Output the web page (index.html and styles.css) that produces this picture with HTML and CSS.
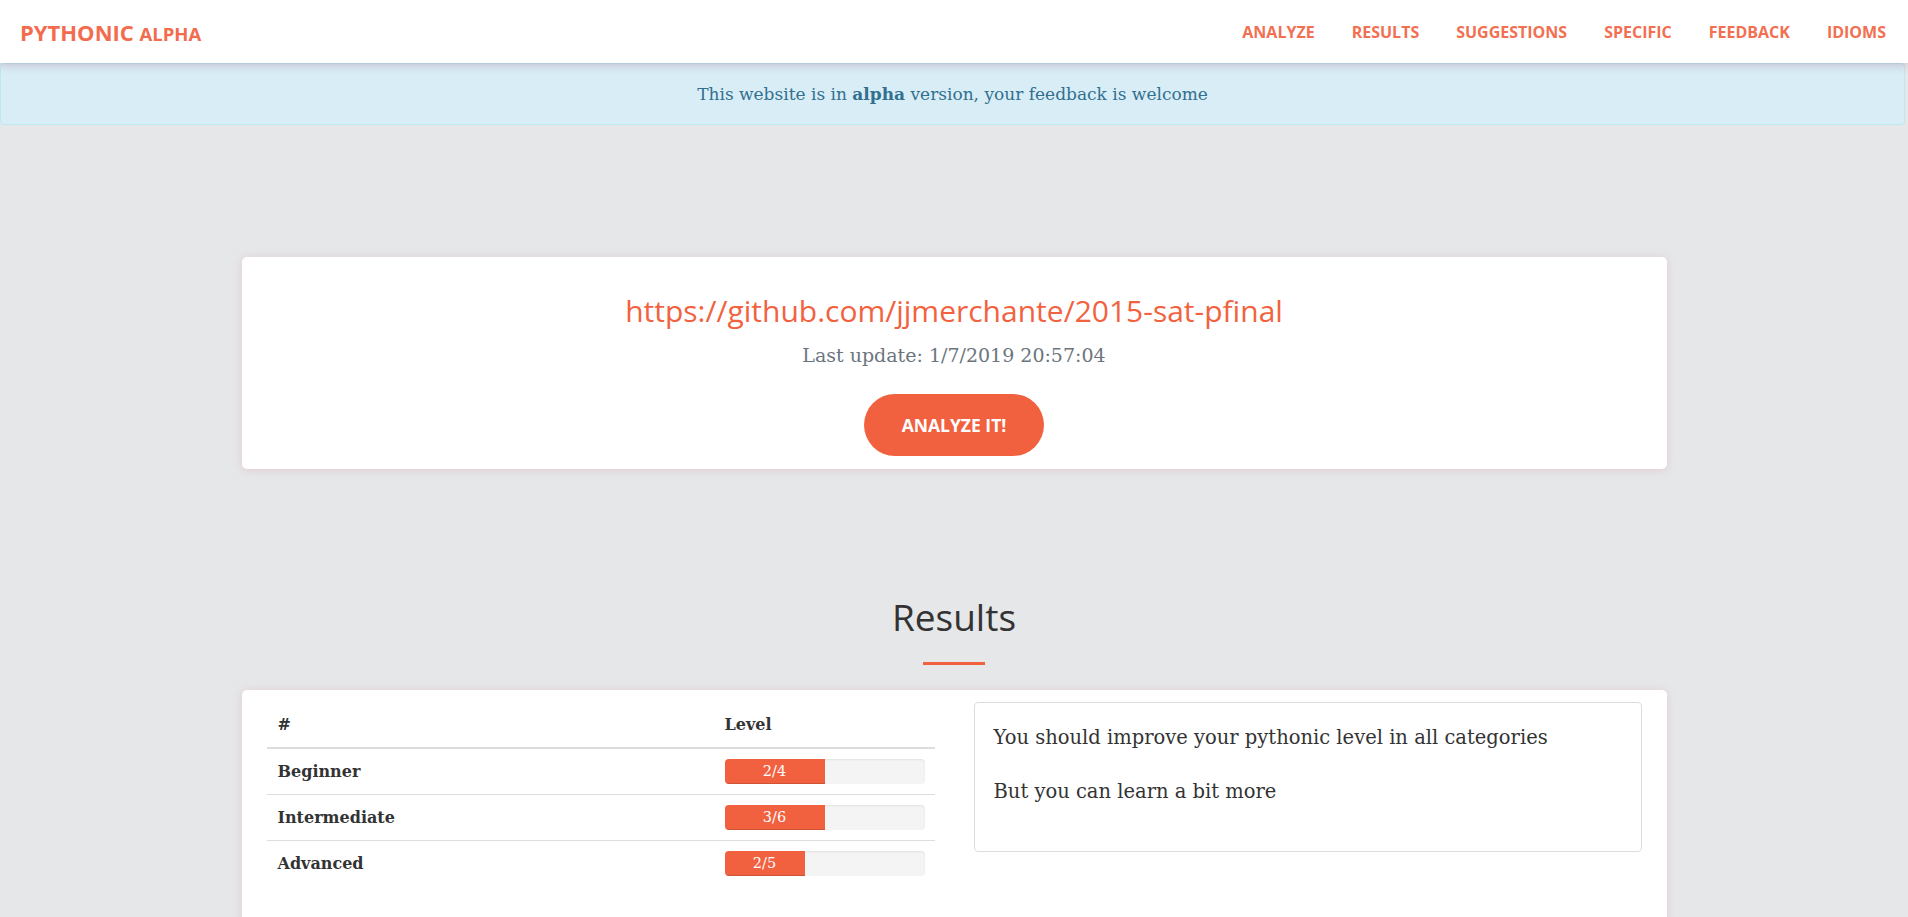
FILE: index.html
```html
<!DOCTYPE html>
<html lang="en">
<head>
<meta charset="utf-8">
<title>Pythonic alpha</title>
<link rel="stylesheet" href="styles.css">
</head>
<body>
<header class="navbar">
  <a class="brand" href="#">PYTHONIC <span class="alpha">ALPHA</span></a>
  <nav class="nav">
    <a href="#">ANALYZE</a>
    <a href="#">RESULTS</a>
    <a href="#">SUGGESTIONS</a>
    <a href="#">SPECIFIC</a>
    <a href="#">FEEDBACK</a>
    <a href="#">IDIOMS</a>
  </nav>
</header>
<div class="alert">This website is in <b>alpha</b> version, your feedback is welcome</div>
<main class="container">
  <section class="card repo-card">
    <a class="repo-url" href="#">https://github.com/jjmerchante/2015-sat-pfinal</a>
    <p class="last-update">Last update: 1/7/2019 20:57:04</p>
    <a class="btn-analyze" href="#">ANALYZE IT!</a>
  </section>
  <h2 class="section-title">Results</h2>
  <div class="title-rule"></div>
  <section class="card results-card">
    <table class="levels">
      <colgroup><col><col class="level-col"></colgroup>
      <thead>
        <tr><th>#</th><th>Level</th></tr>
      </thead>
      <tbody>
        <tr><td>Beginner</td><td><div class="bar"><div class="fill" style="width:50%">2/4</div></div></td></tr>
        <tr><td>Intermediate</td><td><div class="bar"><div class="fill" style="width:50%">3/6</div></div></td></tr>
        <tr><td>Advanced</td><td><div class="bar"><div class="fill" style="width:40%">2/5</div></div></td></tr>
      </tbody>
    </table>
    <div class="advice">
      <p>You should improve your pythonic level in all categories</p>
      <p>But you can learn a bit more</p>
    </div>
  </section>
</main>
</body>
</html>
```
FILE: styles.css
```css
html, body {
  margin: 0;
  padding: 0;
}
body {
  background: #e6e7e9;
  font-family: "DejaVu Serif", "Liberation Serif", serif;
  color: #333;
  min-height: 1100px;
}
a { text-decoration: none; }

.navbar {
  height: 63px;
  background: #fff;
  display: flex;
  align-items: center;
  justify-content: space-between;
  padding: 0 22px 0 20px;
  box-shadow: 0 3px 8px rgba(150, 90, 120, 0.28);
  position: relative;
  z-index: 2;
}
.brand {
  font-family: "Open Sans", sans-serif;
  font-weight: 700;
  font-size: 22px;
  color: #f26c4d;
}
.brand .alpha { font-size: 18.5px; }
.nav {
  display: flex;
  gap: 37px;
}
.nav a {
  font-family: "Open Sans", sans-serif;
  font-weight: 700;
  font-size: 16px;
  color: #f26f51;
}

.alert {
  margin: 0 3px 0 0;
  height: 62px;
  box-sizing: border-box;
  padding: 17px 15px;
  line-height: 26px;
  font-size: 17px;
  text-align: center;
  color: #31708f;
  background: #d9edf7;
  border: 1px solid #bce8f1;
  border-radius: 4px;
}

.container {
  width: 1425px;
  margin: 132px auto 0;
}
.card {
  background: #fff;
  border-radius: 5px;
  box-shadow: 0 1px 8px rgba(215, 150, 160, 0.35);
}
.repo-card {
  padding: 36px 20px 13px;
  text-align: center;
  display: flex;
  flex-direction: column;
  align-items: center;
}
.repo-url {
  font-family: "Open Sans", sans-serif;
  font-size: 30px;
  line-height: 36px;
  color: #f2623f;
}
.last-update {
  margin: 13px 0 0;
  font-size: 19px;
  line-height: 27px;
  color: #6c757d;
}
.btn-analyze {
  margin-top: 25px;
  height: 62px;
  line-height: 62px;
  padding: 0 38px;
  border-radius: 31px;
  background: #f2613f;
  color: #fff;
  font-family: "Open Sans", sans-serif;
  font-weight: 700;
  font-size: 17.5px;
}

.section-title {
  margin: 126px 0 0;
  text-align: center;
  font-family: "Open Sans", sans-serif;
  font-weight: 400;
  font-size: 37px;
  line-height: 44px;
  color: #333;
}
.title-rule {
  width: 62px;
  height: 3px;
  margin: 23px auto 0;
  background: #f2613f;
}

.results-card {
  margin-top: 25px;
  padding: 12px 25px 140px;
  display: grid;
  grid-template-columns: 1fr 1fr;
  gap: 39px;
  align-items: start;
}
.levels {
  width: 100%;
  border-collapse: collapse;
  table-layout: fixed;
  font-size: 16px;
}
.level-col { width: 221px; }
.levels th {
  text-align: left;
  font-weight: 700;
  padding: 11px 11px 10px;
  line-height: 24px;
  border-bottom: 2px solid #dddddd;
  vertical-align: bottom;
}
.levels td {
  padding: 10px 11px;
  line-height: 25px;
  font-weight: 700;
  border-top: 1px solid #dedede;
  vertical-align: middle;
}
.levels tbody tr:first-child td { border-top: 0; }
.bar {
  width: 200px;
  height: 25px;
  background: #f4f4f4;
  border-radius: 4px;
  overflow: hidden;
  box-shadow: inset 0 1px 2px rgba(0, 0, 0, 0.08);
}
.fill {
  height: 25px;
  background: #f2613f;
  color: #fff;
  font-size: 14.5px;
  font-weight: 400;
  line-height: 25px;
  text-align: center;
  box-shadow: inset 0 -1px 0 rgba(0, 0, 0, 0.15);
}
.advice {
  border: 1px solid #dddddd;
  border-radius: 4px;
  padding: 20px 20px 20px 19px;
}
.advice p {
  margin: 0 0 24px;
  font-size: 19.5px;
  line-height: 30px;
  color: #333;
}
```
